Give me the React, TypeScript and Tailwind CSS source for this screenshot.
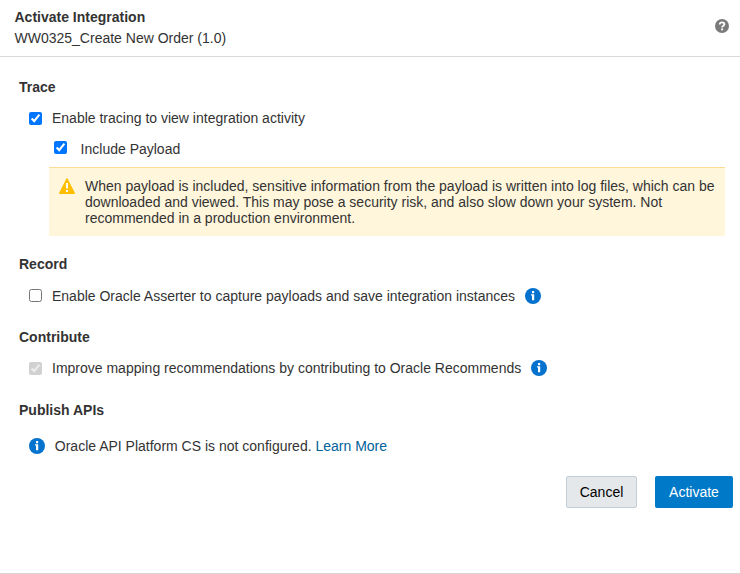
import type { ReactNode } from "react";

function InfoIcon() {
  return (
    <svg className="block h-4 w-4 shrink-0" viewBox="0 0 16 16" aria-hidden="true">
      <circle cx="8" cy="8" r="8" fill="#0572ce" />
      <rect x="7" y="3" width="2.2" height="2.2" rx="0.3" fill="#fff" />
      <path d="M6 6.3h3.2v6H7V7.6H6z" fill="#fff" />
    </svg>
  );
}

function WarningIcon() {
  return (
    <svg className="block h-4 w-4 shrink-0" viewBox="0 0 16 16" aria-hidden="true">
      <path d="M8 .8 15.4 15.3H.6Z" fill="#ffbf00" stroke="#ffbf00" strokeWidth="1.2" strokeLinejoin="round" />
      <path d="M7 5h2v5.5H7zM7 12h2v2H7z" fill="#fff" />
    </svg>
  );
}

function HelpIcon() {
  return (
    <svg className="block h-[14px] w-[14px]" viewBox="0 0 14 14" aria-hidden="true">
      <circle cx="7" cy="7" r="7" fill="#7a7a7a" />
      <path d="M4.7 5.4C4.7 4 5.7 3.3 7 3.3s2.4.7 2.4 1.9C9.4 6.7 7.1 6.8 7.1 8.6" fill="none" stroke="#fff" strokeWidth="1.8" />
      <rect x="6.1" y="9.5" width="2" height="1.8" fill="#fff" />
    </svg>
  );
}

function Heading({ children }: { children: ReactNode }) {
  return <h2 className="pl-[19px] font-bold">{children}</h2>;
}

export default function App() {
  return (
    <div className="flex h-[574px] w-[740px] flex-col overflow-hidden border-b border-[#d6d6d6] bg-white font-['Liberation_Sans',Arial,sans-serif] text-sm leading-5 text-[#333]">
      <header className="flex h-[57px] shrink-0 justify-between border-b border-[#d9d9d9] pt-[7px] pr-[11px] pl-[14.5px]">
        <div>
          <h1 className="font-bold">Activate Integration</h1>
          <p className="mt-px">WW0325_Create New Order (1.0)</p>
        </div>
        <div className="pt-3">
          <HelpIcon />
        </div>
      </header>

      <main className="pt-5">
        <Heading>Trace</Heading>
        <label className="mt-[11px] flex pl-[29px]">
          <input type="checkbox" defaultChecked className="mt-1 mr-[10px] h-[13px] w-[13px]" />
          Enable tracing to view integration activity
        </label>
        <label className="mt-[11px] flex pl-[54px]">
          <input type="checkbox" defaultChecked className="mt-[2px] mr-[13.6px] h-[13px] w-[13px]" />
          Include Payload
        </label>
        <div className="mt-2 mr-[15px] ml-[49px] flex h-[69px] border-t border-[#fbdc93] bg-[#fff6dc] pt-[10px] pl-[10px] leading-4">
          <WarningIcon />
          <p className="ml-[10px] w-[635px]">
            When payload is included, sensitive information from the payload is written into log files, which can be
            downloaded and viewed. This may pose a security risk, and also slow down your system. Not recommended in
            a production environment.
          </p>
        </div>

        <div className="mt-[18px]">
          <Heading>Record</Heading>
          <div className="mt-3 flex pl-[29px]">
            <label className="flex">
              <input type="checkbox" className="mt-[3px] mr-[10px] h-[13px] w-[13px]" />
              Enable Oracle Asserter to capture payloads and save integration instances
            </label>
            <span className="mt-[2px] ml-[10px]"><InfoIcon /></span>
          </div>
        </div>

        <div className="mt-[21px]">
          <Heading>Contribute</Heading>
          <div className="mt-[11px] flex pl-[29px]">
            <label className="flex">
              <input type="checkbox" defaultChecked disabled className="mt-1 mr-[10px] h-[13px] w-[13px]" />
              Improve mapping recommendations by contributing to Oracle Recommends
            </label>
            <span className="mt-[2px] ml-[10px]"><InfoIcon /></span>
          </div>
        </div>

        <div className="mt-[22px]">
          <Heading>Publish APIs</Heading>
          <div className="mt-4 flex items-center pl-[29px]">
            <InfoIcon />
            <p className="ml-[9.8px]">
              Oracle API Platform CS is not configured.{" "}
              <a href="#" className="text-[#006199]">Learn More</a>
            </p>
          </div>
        </div>
      </main>

      <footer className="mt-5 flex justify-end gap-[18px] pr-[7px]">
        <button className="h-8 w-[71px] rounded-xs border border-[#c4ced7] bg-[#e4e8ea] text-black">Cancel</button>
        <button className="h-8 w-[78px] rounded-xs bg-[#007ac8] text-white">Activate</button>
      </footer>
    </div>
  );
}
